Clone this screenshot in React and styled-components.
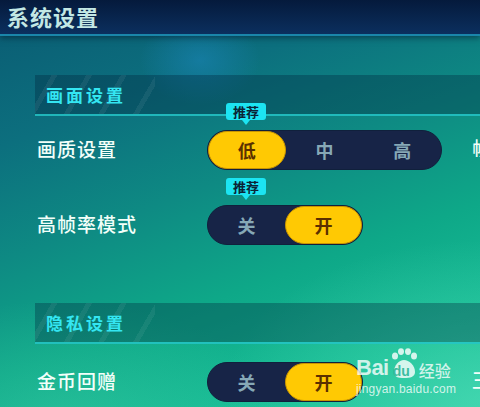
import React from "react";
import styled, { createGlobalStyle } from "styled-components";

const Global = createGlobalStyle`
  html, body { margin: 0; padding: 0; }
  body { font-family: "Noto Sans CJK SC", "Noto Sans", sans-serif; }
`;

const Screen = styled.div`
  position: relative;
  width: 480px;
  height: 407px;
  overflow: hidden;
  background:
    radial-gradient(ellipse 60px 45px at 200px 60px, rgba(30, 140, 200, 0.45), rgba(30, 140, 200, 0) 100%),
    radial-gradient(ellipse 260px 160px at 480px 400px, rgba(90, 230, 190, 0.45), rgba(90, 230, 190, 0) 100%),
    radial-gradient(ellipse 220px 120px at 60px 420px, rgba(70, 210, 170, 0.35), rgba(70, 210, 170, 0) 100%),
    linear-gradient(160deg, #0a5a72 0%, #0c6f7e 25%, #0e8a83 45%, #0ea888 65%, #18bd95 85%, #2cc8a2 100%);
  display: flex;
  flex-direction: column;
`;

const Header = styled.div`
  height: 36px;
  box-sizing: border-box;
  border-bottom: 2px solid #1a86aa;
  background: linear-gradient(180deg, #051a3c 0%, #0b2f5e 100%);
  display: flex;
  align-items: center;
  padding-left: 7px;
  box-shadow: 0 2px 6px rgba(0, 20, 40, 0.5);
`;

const Title = styled.div`
  font-size: 22px;
  font-weight: 700;
  letter-spacing: 1px;
  color: #c3e8e4;
  line-height: 1;
  margin-top: -3px;
`;

const Section = styled.div`
  margin-top: ${(p) => p.$top}px;
  margin-left: 35px;
  height: 41px;
  box-sizing: border-box;
  border-bottom: 2px solid rgba(40, 215, 215, 0.75);
  background:
    repeating-linear-gradient(-60deg, rgba(255,255,255,0) 0 14px, rgba(255,255,255,0.06) 14px 19px, rgba(255,255,255,0) 19px 30px),
    rgba(0, 30, 55, 0.32);
  background-size: 120px 100%, 100% 100%;
  background-repeat: no-repeat;
  display: flex;
  align-items: center;
  padding-left: 11px;
`;

const SectionTitle = styled.div`
  font-size: 17px;
  font-weight: 700;
  letter-spacing: 3px;
  color: #34e6f2;
  line-height: 1;
`;

const Row = styled.div`
  margin-top: ${(p) => p.$top}px;
  height: 40px;
  display: flex;
  align-items: center;
  padding-left: 37px;
`;

const Label = styled.div`
  width: 170px;
  flex: none;
  font-size: 19px;
  font-weight: 500;
  letter-spacing: 1px;
  color: #f2fff9;
  line-height: 1;
  margin-top: -3px;
`;

const Segmented = styled.div`
  position: relative;
  display: flex;
  height: 40px;
  box-sizing: border-box;
  border-radius: 20px;
  background: #172447;
  border: 1px solid #10203c;
  flex: none;
`;

const Option = styled.div`
  width: ${(p) => p.$w}px;
  height: 100%;
  box-sizing: border-box;
  display: flex;
  align-items: center;
  justify-content: center;
  font-size: 18px;
  font-weight: 700;
  border-radius: 20px;
  color: ${(p) => (p.$on ? "#5a3000" : "#86a8b6")};
  background: ${(p) => (p.$on ? "#ffc903" : "transparent")};
  border: ${(p) => (p.$on ? "1px solid #c99500" : "none")};
`;

const Badge = styled.div`
  position: absolute;
  left: 18px;
  top: -28px;
  width: 40px;
  height: 17px;
  border-radius: 3px;
  background: #1ce4f2;
  color: #0b2436;
  font-size: 13px;
  font-weight: 700;
  display: flex;
  align-items: center;
  justify-content: center;
  line-height: 1;
  &::after {
    content: "";
    position: absolute;
    left: 16px;
    bottom: -5px;
    border-left: 4px solid transparent;
    border-right: 4px solid transparent;
    border-top: 5px solid #1ce4f2;
  }
`;

const Edge = styled.div`
  margin-left: auto;
  width: 8px;
  overflow: hidden;
  white-space: nowrap;
  font-size: 19px;
  font-weight: 500;
  color: #f2fff9;
  line-height: 1;
  margin-top: -6px;
`;

const Watermark = styled.div`
  position: absolute;
  left: 356px;
  top: 348px;
  display: flex;
  flex-direction: column;
  color: rgba(255, 255, 255, 0.78);
  font-family: "Liberation Sans", Arial, sans-serif;
`;

const WmTop = styled.div`
  display: flex;
  align-items: flex-end;
  height: 31px;
`;

const WmBai = styled.span`
  font-size: 22px;
  font-weight: 700;
  line-height: 1;
  letter-spacing: -0.5px;
`;

const WmPaw = styled.div`
  position: relative;
  width: 28px;
  height: 31px;
  margin-left: 1px;
`;

const WmDu = styled.span`
  position: absolute;
  left: 3px;
  bottom: 1px;
  font-size: 14px;
  font-weight: 700;
  color: rgba(40, 180, 150, 0.9);
  line-height: 1;
`;

const WmCn = styled.span`
  font-family: "Noto Sans CJK SC", sans-serif;
  font-size: 16px;
  font-weight: 500;
  line-height: 1;
  margin-left: 1px;
  margin-bottom: 1px;
`;

const WmUrl = styled.div`
  font-size: 12px;
  line-height: 1;
  margin-top: 4px;
  letter-spacing: 0.2px;
`;

function Control({ options, selected, badge, width }) {
  return (
    <Segmented>
      {badge && <Badge>推荐</Badge>}
      {options.map((o, i) => (
        <Option key={o} $w={width} $on={i === selected}>
          {o}
        </Option>
      ))}
    </Segmented>
  );
}

export default function App() {
  return (
    <Screen>
      <Global />
      <Header>
        <Title>系统设置</Title>
      </Header>
      <Section $top={39}>
        <SectionTitle>画面设置</SectionTitle>
      </Section>
      <Row $top={14}>
        <Label>画质设置</Label>
        <Control options={["低", "中", "高"]} selected={0} badge width={77.7} />
        <Edge>帧率</Edge>
      </Row>
      <Row $top={35}>
        <Label>高帧率模式</Label>
        <Control options={["关", "开"]} selected={1} badge width={77} />
      </Row>
      <Section $top={58}>
        <SectionTitle>隐私设置</SectionTitle>
      </Section>
      <Row $top={18}>
        <Label>金币回赠</Label>
        <Control options={["关", "开"]} selected={1} width={77} />
        <Edge>王者</Edge>
      </Row>
      <Watermark>
        <WmTop>
          <WmBai>Bai</WmBai>
          <WmPaw>
            <svg width="28" height="31" viewBox="0 0 28 31">
              <g fill="rgba(255,255,255,0.8)">
                <ellipse cx="5" cy="8" rx="3" ry="3.6" />
                <ellipse cx="11" cy="3.6" rx="3" ry="3.4" />
                <ellipse cx="18" cy="3.6" rx="3" ry="3.4" />
                <ellipse cx="24" cy="8" rx="3" ry="3.6" />
                <path d="M4 24 C4 17 9 12 14 12 C19 12 25 17 25 24 C25 29 20 30 14 30 C8 30 4 29 4 24 Z" />
              </g>
            </svg>
            <WmDu>du</WmDu>
          </WmPaw>
          <WmCn>经验</WmCn>
        </WmTop>
        <WmUrl>jingyan.baidu.com</WmUrl>
      </Watermark>
    </Screen>
  );
}
